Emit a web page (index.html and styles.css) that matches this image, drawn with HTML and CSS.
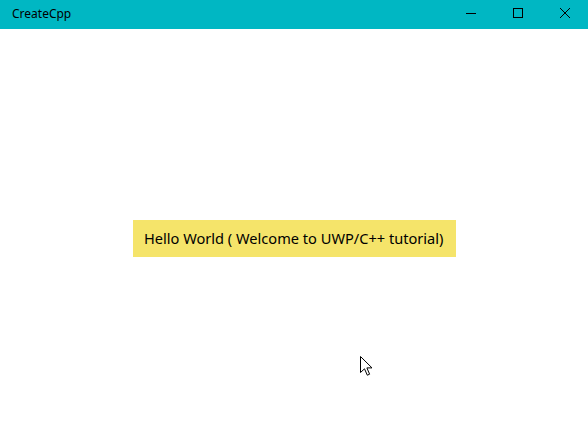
FILE: index.html
```html
<!DOCTYPE html>
<html>
<head>
<meta charset="utf-8">
<link rel="stylesheet" href="styles.css">
</head>
<body>
<div class="window">
  <div class="titlebar">
    <span class="title">CreateCpp</span>
    <div class="controls">
      <div class="btn"><svg width="10" height="10" viewBox="0 0 10 10"><path d="M0 5.5h10" stroke="#000" stroke-width="1"/></svg></div>
      <div class="btn"><svg width="10" height="10" viewBox="0 0 10 10"><rect x="0.5" y="0.5" width="9" height="9" fill="none" stroke="#000" stroke-width="1"/></svg></div>
      <div class="btn"><svg width="10" height="10" viewBox="0 0 10 10"><path d="M0 0L10 10M10 0L0 10" stroke="#000" stroke-width="1"/></svg></div>
    </div>
  </div>
  <div class="content">
    <div class="hello">Hello World ( Welcome to UWP/C++ tutorial)</div>
    <svg class="cursor" width="13" height="20" viewBox="0 0 13 20"><path d="M0.5 0.5V16.5L4.5 12.8L7.3 19.2L9.6 18.2L6.9 11.9H12L0.5 0.5Z" fill="#fff" stroke="#000" stroke-width="1" stroke-linejoin="round"/></svg>
  </div>
</div>
</body>
</html>
```
FILE: styles.css
```css
html, body { margin: 0; padding: 0; }
body { width: 588px; height: 441px; overflow: hidden; background: #fff; font-family: "Noto Sans", "Open Sans", sans-serif; }
.window { width: 588px; height: 441px; display: flex; flex-direction: column; }
.titlebar { height: 29px; background: #00b7c3; display: flex; align-items: center; justify-content: space-between; flex: none; }
.title { font-size: 12px; color: #000; padding-left: 12px; padding-bottom: 2px; }
.controls { display: flex; height: 29px; }
.btn { width: 46px; height: 29px; display: flex; align-items: center; justify-content: center; padding-bottom: 3px; box-sizing: border-box; }
.btn:first-child { padding-right: 4px; }
.btn:nth-child(2) { padding-right: 2px; }
.content { flex: 1; position: relative; display: flex; justify-content: center; }
.hello { margin-top: 191px; margin-left: 1px; width: 323px; height: 37px; box-sizing: border-box; background: #f5e46a; font-size: 14.6px; line-height: 37px; padding-left: 11px; color: #000; align-self: flex-start; white-space: nowrap; }
.cursor { position: absolute; left: 360px; top: 327px; }
```
